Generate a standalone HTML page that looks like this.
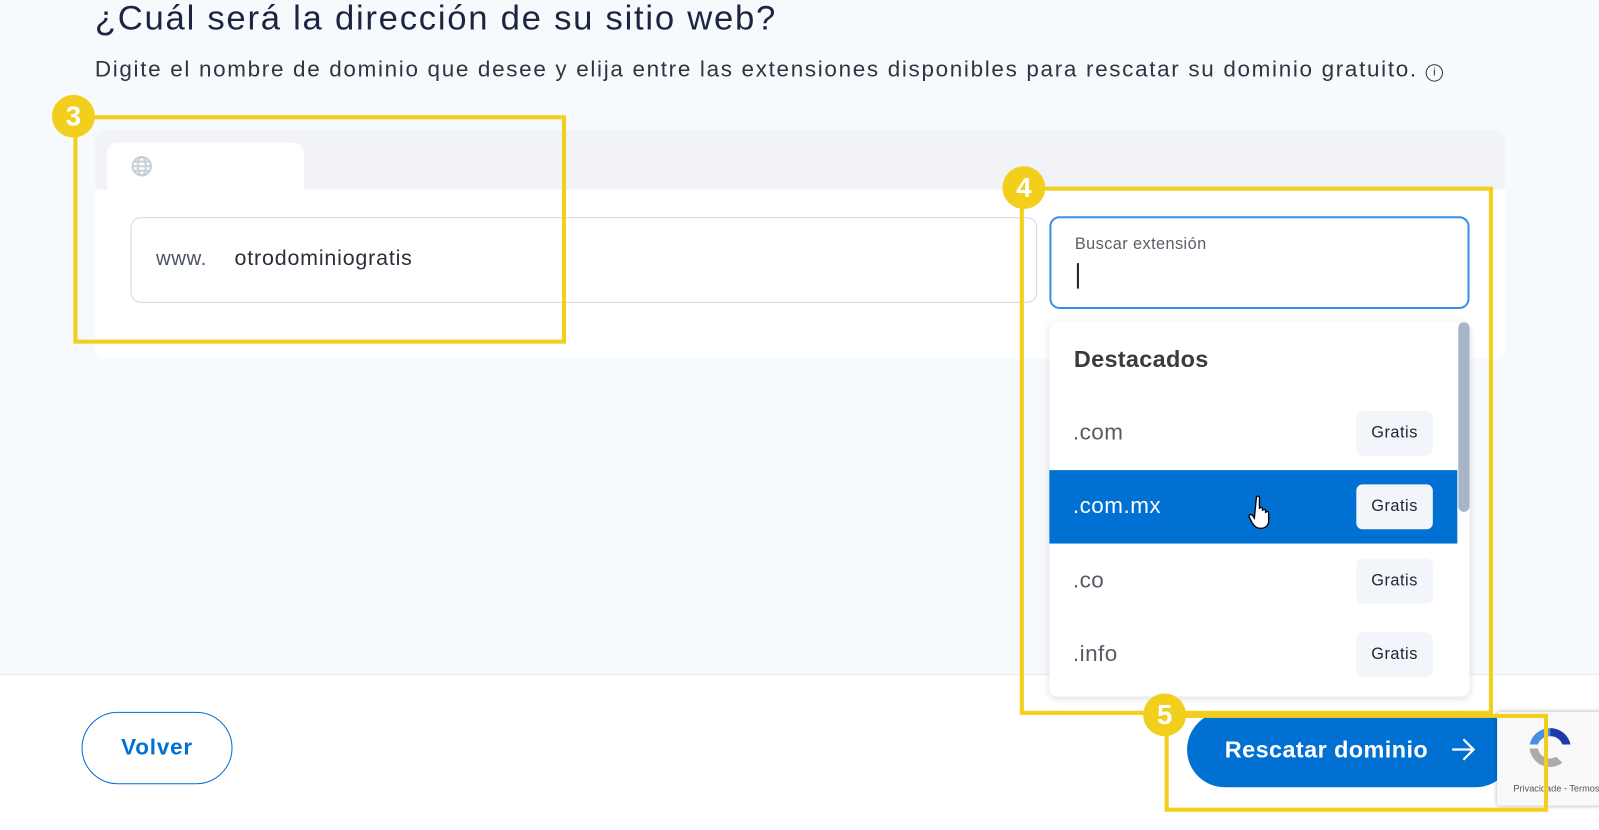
<!DOCTYPE html>
<html><head><meta charset="utf-8"><style>
*{box-sizing:border-box;margin:0;padding:0}
body{width:1599px;height:814px;overflow:hidden;background:#f7fafd;font-family:"Liberation Sans",sans-serif;position:relative}
#w{position:absolute;left:0;top:0;width:1568px;height:798px;transform:scale(1.0198);transform-origin:0 0}
.a{position:absolute}
h1{position:absolute;left:93px;top:-1px;font-size:34px;font-weight:normal;color:#1b2440;letter-spacing:1.7px}
.sub{left:93px;top:55px;font-size:22px;color:#2e3440;letter-spacing:1.65px;white-space:nowrap}
.y{position:absolute;border:4px solid #f2cf1c}
.c{position:absolute;width:42px;height:42px;border-radius:50%;background:#f2cf1c;color:#fff;font-weight:bold;font-size:27px;text-align:center;line-height:42px}
.row{position:absolute;left:1029px;width:400px;height:72px;font-size:22px;color:#555b66;letter-spacing:0.5px}
.row span{position:absolute;left:23px;top:22px}
.g{position:absolute;left:301px;top:14px;width:75px;height:44px;background:#f2f6fb;border-radius:6px;font-size:16px;color:#1e2430;text-align:center;line-height:44px;letter-spacing:0.5px}
</style></head><body><div id="w">
<div class="a" style="left:0;top:661px;width:1600px;height:153px;background:#fff;border-top:1px solid #e6ebf1"></div>
<h1>¿Cuál será la dirección de su sitio web?</h1>
<div class="a sub">Digite el nombre de dominio que desee y elija entre las extensiones disponibles para rescatar su dominio gratuito. <span style="display:inline-block;width:17px;height:17px;border:1.6px solid #333;border-radius:50%;font-size:11px;text-align:center;line-height:14px;vertical-align:1px;letter-spacing:0">i</span></div>

<div class="a" style="left:93px;top:128px;width:1383px;height:224px;background:#fff;border-radius:10px;overflow:hidden">
 <div class="a" style="left:0;top:0;width:1383px;height:58px;background:#f1f3f7"></div>
 <div class="a" style="left:12px;top:12px;width:193px;height:46px;background:#fff;border-radius:10px 10px 0 0"></div>
 <svg class="a" style="left:35px;top:24px" width="22" height="22" viewBox="0 0 22 22" fill="none" stroke="#c9d0d8" stroke-width="2"><circle cx="11" cy="11" r="9"/><ellipse cx="11" cy="11" rx="4" ry="9"/><path d="M2 11h18M3.5 6.5h15M3.5 15.5h15"/></svg>
</div>
<div class="a" style="left:128px;top:213px;width:889px;height:84px;background:#fff;border:1px solid #cfd8e3;border-radius:10px"></div>
<div class="a" style="left:153px;top:243px;font-size:20px;color:#4c5566;letter-spacing:0.5px">www.</div>
<div class="a" style="left:230px;top:242px;font-size:21px;color:#2a2f3a;letter-spacing:0.8px">otrodominiogratis</div>

<div class="a" style="left:1029px;top:212px;width:412px;height:91px;background:#fff;border:2px solid #3b8fe3;border-radius:10px"></div>
<div class="a" style="left:1054px;top:231px;font-size:16px;color:#5a5f68;letter-spacing:0.4px">Buscar extensión</div>
<div class="a" style="left:1056px;top:258px;width:2px;height:25px;background:#222"></div>

<div class="a" style="left:1029px;top:316px;width:412px;height:367px;background:#fff;border-radius:8px;box-shadow:0 2px 8px rgba(0,0,0,.12)"></div>
<div class="a" style="left:1430px;top:316px;width:11px;height:186px;background:#a8b5c8;border-radius:6px"></div>
<div class="a" style="left:1053px;top:339px;font-size:23px;font-weight:bold;color:#3b3b3b;letter-spacing:0.3px">Destacados</div>
<div class="row" style="top:389px"><span>.com</span><div class="g">Gratis</div></div>
<div class="row" style="top:461px;background:#0070d2;color:#fff"><span>.com.mx</span><div class="g">Gratis</div></div>
<div class="row" style="top:534px"><span>.co</span><div class="g">Gratis</div></div>
<div class="row" style="top:606px"><span>.info</span><div class="g">Gratis</div></div>
<svg class="a" style="left:1224px;top:485px" width="28" height="34" viewBox="0 0 28 34"><path d="M8 3c0-2 3-2 3 0v11c0-2 3-2 3 0v2c0-2 3-2 3 0v2c0-2 3-2 3 0v8c0 4-3 7-7 7h-2c-3 0-5-2-7-5l-3-6c-1-2 1-3 3-2l2 3z" fill="#fff" stroke="#000" stroke-width="1.3"/></svg>

<div class="a" style="left:80px;top:698px;width:148px;height:71px;border:1.5px solid #0070d2;border-radius:36px;color:#0070d2;font-size:22px;font-weight:bold;text-align:center;line-height:68px;letter-spacing:0.8px">Volver</div>
<div class="a" style="left:1164px;top:698px;width:320px;height:74px;background:#0070d2;border-radius:37px;color:#fff;font-size:23px;font-weight:bold;line-height:74px;padding-left:37px;letter-spacing:0.4px">Rescatar dominio</div>
<svg class="a" style="left:1422px;top:723px" width="26" height="24" viewBox="0 0 26 24" fill="none" stroke="#fff" stroke-width="2.2"><path d="M2 12h21M13 2l10 10-10 10"/></svg>
<div class="a" style="left:1468px;top:698px;width:140px;height:92px;background:#f9f9f9;box-shadow:0 0 4px rgba(0,0,0,.3);border-radius:3px"></div>
<svg class="a" style="left:1490px;top:706px" width="60" height="56" viewBox="0 0 60 56"><path d="M30 8a20 20 0 0 1 20 16h-8a12 12 0 0 0-12-8z" fill="#1c3aa9"/><path d="M10 24a20 20 0 0 1 20-16v8a12 12 0 0 0-12 8z" fill="#4a90e2"/><path d="M10 28a20 20 0 0 0 32 14l-6-6a12 12 0 0 1-18-8z" fill="#ababab"/></svg>
<div class="a" style="left:1484px;top:768px;font-size:9px;color:#555;white-space:nowrap">Privacidade - Termos</div>

<div class="y" style="left:72px;top:113px;width:483px;height:224px"></div>
<div class="c" style="left:51px;top:93px">3</div>
<div class="y" style="left:1000px;top:183px;width:464px;height:518px"></div>
<div class="c" style="left:983px;top:163px">4</div>
<div class="y" style="left:1142px;top:700px;width:376px;height:96px"></div>
<div class="c" style="left:1121px;top:680px">5</div>
</div></body></html>
